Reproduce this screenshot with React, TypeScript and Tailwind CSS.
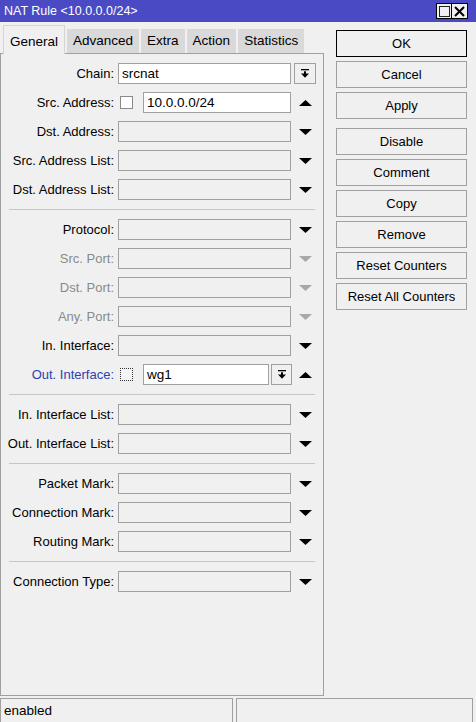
import React from "react";

type Row = {
  label: string;
  kind: "plain" | "combo" | "check" | "checkcombo";
  value?: string;
  arrow?: "up" | "down";
  tone?: "gray" | "blue";
};

const groups: Row[][] = [
  [
    { label: "Chain:", kind: "combo", value: "srcnat" },
    { label: "Src. Address:", kind: "check", value: "10.0.0.0/24", arrow: "up" },
    { label: "Dst. Address:", kind: "plain", arrow: "down" },
    { label: "Src. Address List:", kind: "plain", arrow: "down" },
    { label: "Dst. Address List:", kind: "plain", arrow: "down" },
  ],
  [
    { label: "Protocol:", kind: "plain", arrow: "down" },
    { label: "Src. Port:", kind: "plain", arrow: "down", tone: "gray" },
    { label: "Dst. Port:", kind: "plain", arrow: "down", tone: "gray" },
    { label: "Any. Port:", kind: "plain", arrow: "down", tone: "gray" },
    { label: "In. Interface:", kind: "plain", arrow: "down" },
    { label: "Out. Interface:", kind: "checkcombo", value: "wg1", arrow: "up", tone: "blue" },
  ],
  [
    { label: "In. Interface List:", kind: "plain", arrow: "down" },
    { label: "Out. Interface List:", kind: "plain", arrow: "down" },
  ],
  [
    { label: "Packet Mark:", kind: "plain", arrow: "down" },
    { label: "Connection Mark:", kind: "plain", arrow: "down" },
    { label: "Routing Mark:", kind: "plain", arrow: "down" },
  ],
  [{ label: "Connection Type:", kind: "plain", arrow: "down" }],
];

const buttons = [
  ["OK", "Cancel", "Apply"],
  ["Disable", "Comment", "Copy", "Remove", "Reset Counters", "Reset All Counters"],
];

const tabs = ["General", "Advanced", "Extra", "Action", "Statistics"];

function Tri({ up, gray }: { up?: boolean; gray?: boolean }) {
  return (
    <svg width="13" height="6" viewBox="0 0 13 6">
      <polygon points={up ? "0,6 13,6 6.5,0" : "0,0 13,0 6.5,6"} fill={gray ? "#a8a8a8" : "#000"} />
    </svg>
  );
}

function DropButton({ className }: { className: string }) {
  return (
    <div className={`h-[21px] w-[21px] border border-[#a0a0a0] bg-[#f0f0f0] flex items-center justify-center ${className}`}>
      <svg width="8" height="9" viewBox="0 0 8 9">
        <rect x="0" y="0" width="8" height="1.3" fill="#000" />
        <rect x="3" y="2.3" width="2" height="2.7" fill="#000" />
        <polygon points="0,4.5 8,4.5 4,8.8" fill="#000" />
      </svg>
    </div>
  );
}

function FormRow({ row }: { row: Row }) {
  const labelColor =
    row.tone === "gray" ? "text-[#8a8a8a]" : row.tone === "blue" ? "text-[#2f3fb0]" : "text-black";
  const filled = row.value !== undefined;
  return (
    <div className="flex items-center h-[21px]">
      <span className={`w-[113px] text-right whitespace-nowrap text-[13px] ${labelColor}`}>{row.label}</span>
      {row.kind === "check" && <div className="ml-[6px] w-[13px] h-[13px] border border-[#8a8a8a] bg-white" />}
      {row.kind === "checkcombo" && (
        <div className="ml-[6px] w-[13px] h-[13px] border border-dotted border-[#333] bg-[#f4f4f4]" />
      )}
      <div
        className={`h-[21px] border border-[#a0a0a0] flex items-center pl-[3px] ${
          filled ? "bg-white" : "bg-[#f0f0f0]"
        } ${
          row.kind === "check"
            ? "ml-[10px] w-[148px]"
            : row.kind === "checkcombo"
            ? "ml-[10px] w-[126px]"
            : "ml-[4px] w-[173px]"
        }`}
      >
        {row.value}
      </div>
      {row.kind === "combo" && <DropButton className="ml-[3px] w-[22px]" />}
      {row.kind === "checkcombo" && <DropButton className="ml-[2px]" />}
      {row.arrow && (
        <div className={`${row.kind === "checkcombo" ? "ml-[2px]" : "ml-[3px]"} w-[22px] flex justify-center`}>
          <Tri up={row.arrow === "up"} gray={row.tone === "gray"} />
        </div>
      )}
    </div>
  );
}

export default function App() {
  return (
    <div className="w-[476px] h-[722px] bg-[#f0f0f0] flex flex-col overflow-hidden font-['Liberation_Sans',Arial,sans-serif] text-[13.5px] leading-none text-black">
      {/* Title bar */}
      <div className="h-[22px] bg-[#4a4ac4] flex items-center justify-between pl-[4px] pr-[8px]">
        <span className="text-white text-[12.5px]">NAT Rule &lt;10.0.0.0/24&gt;</span>
        <div className="flex">
          <div className="w-[16px] h-[16px] border border-black bg-[#f0f0f0] flex items-center justify-center">
            <div className="w-[11px] h-[11px] border border-[#222]" />
          </div>
          <div className="w-[16px] h-[16px] border border-black border-l-0 bg-[#f0f0f0] flex items-center justify-center">
            <svg width="11" height="11" viewBox="0 0 11 11">
              <path d="M1 1 L10 10 M10 1 L1 10" stroke="#000" strokeWidth="2" />
            </svg>
          </div>
        </div>
      </div>

      <div className="h-[676px] flex">
        {/* Left: tabs and form */}
        <div className="w-[324px] flex flex-col">
          <div className="h-[31px] flex items-end gap-[2px] pl-[3px]">
            {tabs.map((t, i) =>
              i === 0 ? (
                <div
                  key={t}
                  className="relative z-10 -mb-px h-[29px] pt-[4px] px-[6px] flex items-center bg-[#f0f0f0] border border-b-0 border-[#d4d4d4]"
                >
                  {t}
                </div>
              ) : (
                <div key={t} className="h-[24px] px-[6px] flex items-center bg-[#d9d9d9]">
                  {t}
                </div>
              )
            )}
          </div>
          <div className="flex-1 mb-[2px] border border-[#a0a0a0] pt-[9px] flex flex-col">
            {groups.map((g, gi) => (
              <React.Fragment key={gi}>
                {gi > 0 && <div className="ml-[8px] w-[306px] h-px bg-[#c6c6c6] my-[9px]" />}
                <div className="flex flex-col gap-[8px]">
                  {g.map((r) => (
                    <FormRow key={r.label} row={r} />
                  ))}
                </div>
              </React.Fragment>
            ))}
          </div>
        </div>

        {/* Right: buttons */}
        <div className="pl-[12px] pt-[8px] flex flex-col gap-[9px] text-[13px]">
          {buttons.map((set, si) => (
            <div key={si} className="flex flex-col gap-[4px]">
              {set.map((b) => (
                <div
                  key={b}
                  className={`w-[131px] h-[27px] flex items-center justify-center bg-[#f0f0f0] border ${
                    b === "OK" ? "border-black" : "border-[#a0a0a0]"
                  }`}
                >
                  {b}
                </div>
              ))}
            </div>
          ))}
        </div>
      </div>

      {/* Status bar */}
      <div className="h-[24px] flex gap-[3px]">
        <div className="w-[233px] border border-b-0 border-[#a0a0a0] flex items-center pl-[3px]">enabled</div>
        <div className="w-[237px] border border-b-0 border-[#a0a0a0]" />
      </div>
    </div>
  );
}
